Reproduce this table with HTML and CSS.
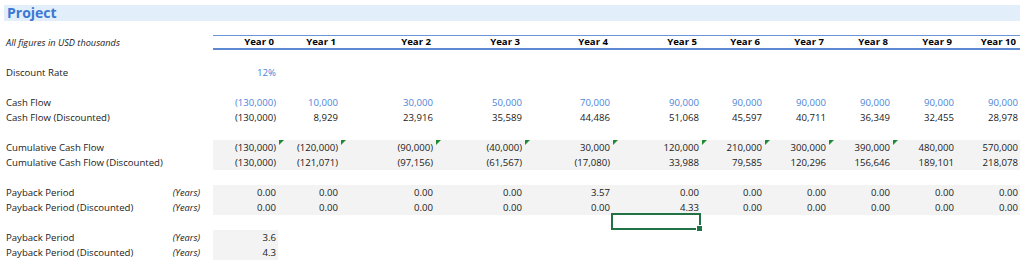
FILE: index.html
```html
<!DOCTYPE html>
<html>
<head>
	<title>Project Payback</title>
	<link rel="stylesheet" href="styles.css">
</head>
<body>
	<div class="sheet">
		<div class="title">Project</div>

		<div class="row head">
			<div class="label note">All figures in USD thousands</div>
			<div class="unit"></div>
			<div class="pad"></div>
			<div class="yr">Year 0</div>
			<div class="yr">Year 1</div>
			<div class="yr">Year 2</div>
			<div class="yr">Year 3</div>
			<div class="yr">Year 4</div>
			<div class="yr">Year 5</div>
			<div class="yr">Year 6</div>
			<div class="yr">Year 7</div>
			<div class="yr">Year 8</div>
			<div class="yr">Year 9</div>
			<div class="yr">Year 10</div>
		</div>

		<div class="gap"></div>

		<div class="row">
			<div class="label">Discount Rate</div>
			<div class="unit"></div>
			<div class="pad"></div>
			<div class="val input">12%</div>
		</div>

		<div class="gap"></div>

		<div class="row">
			<div class="label">Cash Flow</div>
			<div class="unit"></div>
			<div class="pad"></div>
			<div class="val input">(130,000)</div>
			<div class="val input">10,000</div>
			<div class="val input">30,000</div>
			<div class="val input">50,000</div>
			<div class="val input">70,000</div>
			<div class="val input">90,000</div>
			<div class="val input">90,000</div>
			<div class="val input">90,000</div>
			<div class="val input">90,000</div>
			<div class="val input">90,000</div>
			<div class="val input">90,000</div>
		</div>
		<div class="row">
			<div class="label">Cash Flow (Discounted)</div>
			<div class="unit"></div>
			<div class="pad"></div>
			<div class="val">(130,000)</div>
			<div class="val">8,929</div>
			<div class="val">23,916</div>
			<div class="val">35,589</div>
			<div class="val">44,486</div>
			<div class="val">51,068</div>
			<div class="val">45,597</div>
			<div class="val">40,711</div>
			<div class="val">36,349</div>
			<div class="val">32,455</div>
			<div class="val">28,978</div>
		</div>

		<div class="gap"></div>

		<div class="row shaded">
			<div class="label">Cumulative Cash Flow</div>
			<div class="unit"></div>
			<div class="pad"></div>
			<div class="val">(130,000)</div>
			<div class="val flag">(120,000)</div>
			<div class="val flag">(90,000)</div>
			<div class="val flag">(40,000)</div>
			<div class="val flag">30,000</div>
			<div class="val flag">120,000</div>
			<div class="val flag">210,000</div>
			<div class="val flag">300,000</div>
			<div class="val flag">390,000</div>
			<div class="val flag">480,000</div>
			<div class="val">570,000</div>
		</div>
		<div class="row shaded">
			<div class="label">Cumulative Cash Flow (Discounted)</div>
			<div class="unit"></div>
			<div class="pad"></div>
			<div class="val">(130,000)</div>
			<div class="val">(121,071)</div>
			<div class="val">(97,156)</div>
			<div class="val">(61,567)</div>
			<div class="val">(17,080)</div>
			<div class="val">33,988</div>
			<div class="val">79,585</div>
			<div class="val">120,296</div>
			<div class="val">156,646</div>
			<div class="val">189,101</div>
			<div class="val">218,078</div>
		</div>

		<div class="gap"></div>

		<div class="row shaded">
			<div class="label">Payback Period</div>
			<div class="unit">(Years)</div>
			<div class="pad"></div>
			<div class="val">0.00</div>
			<div class="val">0.00</div>
			<div class="val">0.00</div>
			<div class="val">0.00</div>
			<div class="val">3.57</div>
			<div class="val">0.00</div>
			<div class="val">0.00</div>
			<div class="val">0.00</div>
			<div class="val">0.00</div>
			<div class="val">0.00</div>
			<div class="val">0.00</div>
		</div>
		<div class="row shaded">
			<div class="label">Payback Period (Discounted)</div>
			<div class="unit">(Years)</div>
			<div class="pad"></div>
			<div class="val">0.00</div>
			<div class="val">0.00</div>
			<div class="val">0.00</div>
			<div class="val">0.00</div>
			<div class="val">0.00</div>
			<div class="val">4.33</div>
			<div class="val">0.00</div>
			<div class="val">0.00</div>
			<div class="val">0.00</div>
			<div class="val">0.00</div>
			<div class="val">0.00</div>
		</div>

		<!-- empty row holding the active cell -->
		<div class="row">
			<div class="label"></div>
			<div class="unit"></div>
			<div class="pad"></div>
			<div class="val"></div>
			<div class="val"></div>
			<div class="val"></div>
			<div class="val"></div>
			<div class="val"></div>
			<div class="val active"><span class="handle"></span></div>
		</div>

		<div class="row summary">
			<div class="label">Payback Period</div>
			<div class="unit">(Years)</div>
			<div class="pad"></div>
			<div class="val">3.6</div>
		</div>
		<div class="row summary">
			<div class="label">Payback Period (Discounted)</div>
			<div class="unit">(Years)</div>
			<div class="pad"></div>
			<div class="val">4.3</div>
		</div>
	</div>
</body>
</html>
```

FILE: styles.css
```css
body {
	margin: 0;
	padding: 0;
	background-color: #ffffff;
	font-family: "Open Sans", "Noto Sans", sans-serif;
	font-size: 9.6px;
	color: #1a1a1a;
}

.sheet {
	padding-top: 5px;
	width: 1020px;
}

.title {
	height: 16px;
	line-height: 16px;
	margin-left: 4px;
	margin-bottom: 14px;
	padding-left: 3px;
	background-color: #e3eefb;
	color: #3b78d4;
	font-size: 14px;
	font-weight: bold;
}

.row {
	display: grid;
	grid-template-columns: 170px 35px 8px 65px 62px 95px 89px 88px 89px 63px 64px 64px 64px 64px;
	height: 15px;
	line-height: 15px;
}

.gap {
	height: 15px;
}

.label {
	padding-left: 6px;
	white-space: nowrap;
}

.note {
	font-style: italic;
	font-size: 9.2px;
}

.unit {
	text-align: right;
	padding-right: 5px;
	font-style: italic;
	font-size: 9.2px;
	white-space: nowrap;
}

.yr {
	text-align: right;
	padding-right: 4px;
	font-weight: bold;
	color: #000000;
	border-top: 1px solid #6a95d6;
	border-bottom: 2px solid #5b88d0;
	line-height: 12px;
}

.head {
	height: 15px;
}

.val {
	text-align: right;
	padding-right: 2px;
	position: relative;
	white-space: nowrap;
}

.input {
	color: #4a84d8;
}

.shaded .val,
.summary .val {
	background-color: #f3f3f3;
}

.flag::before {
	content: "";
	position: absolute;
	top: 0;
	left: 1px;
	border-top: 5px solid #1f8a2f;
	border-right: 5px solid transparent;
}

.active::after {
	content: "";
	position: absolute;
	top: -2px;
	left: -1px;
	right: 0;
	bottom: 0;
	border: 2px solid #217346;
}

.handle {
	position: absolute;
	right: -2px;
	bottom: -2px;
	width: 5px;
	height: 5px;
	background-color: #217346;
	border: 1px solid #ffffff;
	z-index: 1;
}
```
